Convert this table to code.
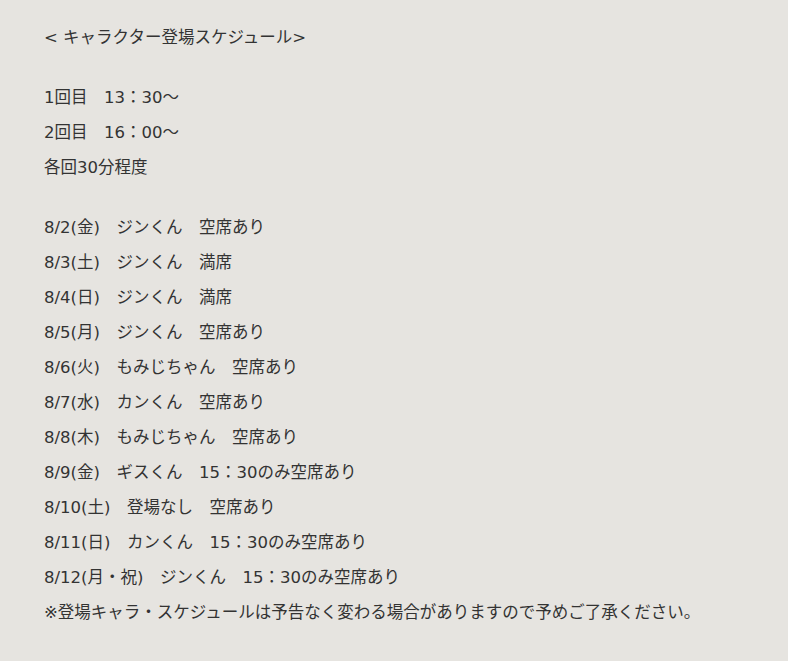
import React from 'react';

const times = ['1回目　13：30～', '2回目　16：00～', '各回30分程度'];

const schedule = [
  '8/2(金)　ジンくん　空席あり',
  '8/3(土)　ジンくん　満席',
  '8/4(日)　ジンくん　満席',
  '8/5(月)　ジンくん　空席あり',
  '8/6(火)　もみじちゃん　空席あり',
  '8/7(水)　カンくん　空席あり',
  '8/8(木)　もみじちゃん　空席あり',
  '8/9(金)　ギスくん　15：30のみ空席あり',
  '8/10(土)　登場なし　空席あり',
  '8/11(日)　カンくん　15：30のみ空席あり',
  '8/12(月・祝)　ジンくん　15：30のみ空席あり',
  '※登場キャラ・スケジュールは予告なく変わる場合がありますので予めご了承ください。',
];

const Lines = ({ items }) => (
  <p className="mb-[25px]">
    {items.map((line, i) => (
      <span key={i} className="block">{line}</span>
    ))}
  </p>
);

export default function App() {
  return (
    <div
      className="min-h-screen bg-[#e6e4e0] text-[#333333] text-[16.5px] leading-[35px] pl-[44px] pt-[20px]"
      style={{ fontFamily: '"DejaVu Sans", "Noto Sans CJK JP", sans-serif' }}
    >
      <p className="mb-[25px]">&lt; キャラクター登場スケジュール&gt;</p>
      <Lines items={times} />
      <Lines items={schedule} />
    </div>
  );
}
